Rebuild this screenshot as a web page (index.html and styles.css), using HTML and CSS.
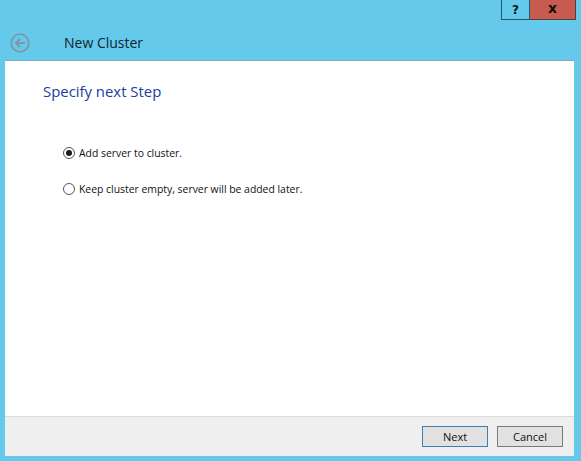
FILE: index.html
```html
<!DOCTYPE html>
<html lang="en">
<head>
<meta charset="utf-8">
<title>New Cluster</title>
<link rel="stylesheet" href="styles.css">
</head>
<body>
<div class="window">
  <div class="controls">
    <div class="ctl help">?</div>
    <div class="ctl close">x</div>
  </div>
  <header class="titlebar">
    <svg class="back" width="20" height="20" viewBox="0 0 20 20">
      <circle cx="10" cy="10" r="8.8" fill="none" stroke="#7f97a3" stroke-width="1.7"/>
      <path d="M15 10H6.5M10 6l-4 4 4 4" fill="none" stroke="#7f97a3" stroke-width="2"/>
    </svg>
    <span class="title">New Cluster</span>
  </header>
  <main class="panel">
    <section class="body">
      <h1 class="heading">Specify next Step</h1>
      <div class="options">
        <div class="option"><span class="radio checked"></span><span>Add server to cluster.</span></div>
        <div class="option"><span class="radio"></span><span>Keep cluster empty, server will be added later.</span></div>
      </div>
    </section>
    <footer class="footer">
      <div class="btn primary">Next</div>
      <div class="btn">Cancel</div>
    </footer>
  </main>
</div>
</body>
</html>
```
FILE: styles.css
```css
* { box-sizing: border-box; }
html, body { margin: 0; height: 100%; }
body { background: #65c9ec; font-family: "Open Sans", "Noto Sans", sans-serif; overflow: hidden; }
.window { width: 581px; height: 461px; display: flex; flex-direction: column; padding: 0 7px 5px 5px; }
.controls { height: 20px; display: flex; justify-content: flex-end; margin-right: -2px; }
.ctl { height: 20px; display: flex; align-items: center; justify-content: center; font-family: "DejaVu Sans", sans-serif; font-weight: 700; color: #111; border-bottom: 1px solid #2c5870; }
.help { width: 29px; font-size: 12px; border-left: 1px solid #1d5a78; border-right: 1px solid #1d5a78; }
.close { width: 46px; font-size: 14px; background: #c75b50; border-right: 1px solid #52403f; border-bottom-color: #52403f; line-height: 1; padding-bottom: 3px; }
.titlebar { height: 40px; display: flex; align-items: center; padding: 5px 0 0 5px; }
.back { flex: none; }
.title { margin-left: 34px; font-size: 14px; color: #10252f; }
.panel { flex: 1; display: flex; flex-direction: column; background: #fff; border-top: 1px solid #7fa9bd; }
.body { flex: 1; padding: 20px 38px; }
.heading { margin: 0; font-size: 14.9px; font-weight: 400; line-height: 20px; color: #1a3e9c; }
.options { margin-top: 43px; margin-left: 20px; display: flex; flex-direction: column; gap: 18px; }
.option { display: flex; align-items: center; height: 18px; font-size: 10.4px; color: #111; gap: 4px; }
.radio { width: 12px; height: 12px; border: 1px solid #555; border-radius: 50%; background: #fff; display: flex; align-items: center; justify-content: center; }
.radio.checked::after { content: ""; width: 6px; height: 6px; border-radius: 50%; background: #1a1a1a; }
.footer { height: 40px; flex: none; display: flex; justify-content: flex-end; align-items: flex-start; gap: 9px; padding: 9px 11px 0 0; background: #efefef; border-top: 1px solid #dcdcdc; }
.btn { width: 66px; height: 21px; display: flex; align-items: center; justify-content: center; font-size: 11px; color: #111; background: #e1e1e1; border: 1px solid #7a7a7a; }
.btn.primary { border-color: #3c7fb1; }
```
